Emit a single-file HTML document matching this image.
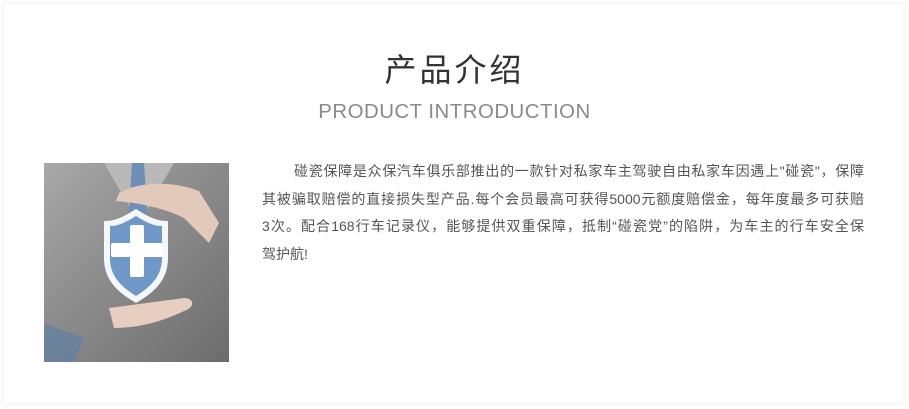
<!DOCTYPE html>
<html><head><meta charset="utf-8"><style>
html,body{margin:0;padding:0;background:#fff;}
body{width:909px;height:409px;position:relative;overflow:hidden;font-family:"Liberation Sans","Noto Sans CJK SC",sans-serif;}
.card{position:absolute;left:3px;top:3px;width:901px;height:401px;box-shadow:0 0 3px rgba(0,0,0,0.06);border:1px solid #f6f6f6;box-sizing:border-box;}
.t{position:absolute;left:0;width:909px;text-align:center;top:50px;font-size:32px;color:#333;letter-spacing:3px;line-height:40px;}
.s{position:absolute;left:0;width:909px;text-align:center;top:99px;font-size:20.4px;color:#8a8a8a;letter-spacing:0.5px;line-height:26px;}
.img{position:absolute;left:44px;top:163px;width:185px;height:199px;overflow:hidden;background:linear-gradient(135deg,#a8a8a8 0%,#8f8f8f 40%,#7e7e7e 70%,#6c6c6c 100%);}
.p{position:absolute;left:262px;top:158px;width:602px;font-size:14px;line-height:27.5px;color:#555;}
.l{white-space:nowrap;text-align:justify;text-align-last:justify;}
.l.last{text-align-last:left;}
</style></head><body>
<div class="card"></div>
<div class="t">产品介绍</div>
<div class="s">PRODUCT INTRODUCTION</div>
<div class="img">
<svg width="185" height="199" viewBox="0 0 185 199">
<path d="M60 0 L95 60 L130 0 Z" fill="#b9b9b9"/>
<path d="M88 0 L100 0 L104 60 L94 75 L84 60 Z" fill="#6e8fb8"/>
<path d="M75 30 C95 18 130 18 155 28 L175 60 L165 80 L140 55 C120 45 95 40 72 38 Z" fill="#e2c9b9"/>
<path d="M65 145 L140 135 C152 136 150 145 140 148 C120 158 95 165 70 165 Z" fill="#e6cfc0"/>
<path d="M92 46 C76 56 70 58 60 58 L60 95 C60 118 75 130 92 140 C109 130 124 118 124 95 L124 58 C114 58 108 56 92 46 Z" fill="#f4f7fb"/>
<path d="M92 53 C79 61 73 63 66 63 L66 95 C66 114 78 124 92 133 C106 124 118 114 118 95 L118 63 C111 63 105 61 92 53 Z" fill="#6f97c8"/>
<rect x="86" y="62" width="14" height="52" rx="2" fill="#fff"/>
<rect x="67" y="80" width="52" height="14" rx="2" fill="#fff"/>
<path d="M0 160 L40 175 L30 199 L0 199 Z" fill="#5a7fa8" opacity="0.6"/>
</svg>
</div>
<div class="p">
<div class="l" style="padding-left:32px">碰瓷保障是众保汽车俱乐部推出的一款针对私家车主驾驶自由私家车因遇上"碰瓷"，保障</div>
<div class="l">其被骗取赔偿的直接损失型产品.每个会员最高可获得5000元额度赔偿金，每年度最多可获赔</div>
<div class="l">3次。配合168行车记录仪，能够提供双重保障，抵制“碰瓷党”的陷阱，为车主的行车安全保</div>
<div class="l last">驾护航!</div>
</div>
</body></html>
